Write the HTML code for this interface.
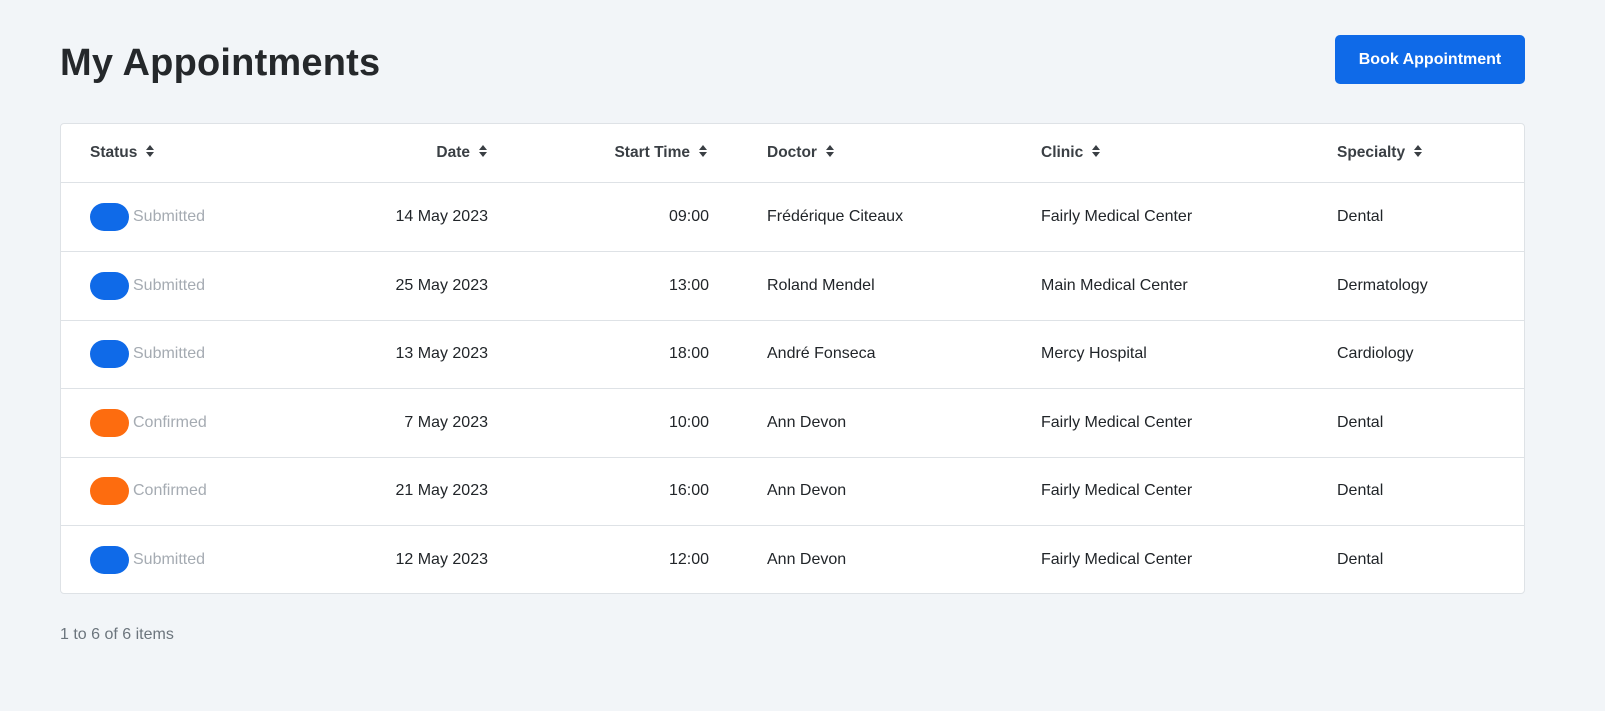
<!DOCTYPE html>
<html><head><style>
body{margin:0;background:#f2f5f8;font-family:"Liberation Sans",sans-serif;color:#212529;width:1605px;height:711px;overflow:hidden;position:relative}
h1{position:absolute;left:60px;top:42px;margin:0;font-size:38px;font-weight:600;color:#25282b;letter-spacing:0.2px}
.btn{position:absolute;left:1335px;top:35px;width:190px;height:49px;background:#0f6ae8;border-radius:5px;color:#fff;font-weight:bold;font-size:16px;line-height:49px;text-align:center}
.card{position:absolute;left:60px;top:123px;width:1463px;height:469px;background:#fff;border:1px solid #dee2e6;border-radius:4px}
.row{position:absolute;left:0;width:1463px;border-bottom:1px solid #dee2e6;height:68px}
.row:last-child{border-bottom:none}
.c{position:absolute;top:0;line-height:68px;font-size:16px;white-space:nowrap}
.h .c{font-weight:bold;color:#3a3f44;font-size:15.5px;line-height:58px}
.r{text-align:right}
.pill{position:absolute;left:29px;top:20px;width:39px;height:28px;border-radius:14px}
.st{left:72px;color:#a5abb2}
.s{display:inline-block;margin-left:8px;vertical-align:middle;width:10px;height:14px;position:relative;top:-2px}
.foot{position:absolute;left:60px;top:626px;font-size:16px;color:#6c757d}
</style></head><body>
<h1>My Appointments</h1>
<div class="btn">Book Appointment</div>
<div class="card">
<div class="row h" style="top:0;height:58px">
<div class="c" style="left:29px">Status<svg class="s" viewBox="0 0 10 14"><path d="M1 6L5 1 9 6zM1 8l4 5 4-5z" fill="#3a3f44"/></svg></div>
<div class="c r" style="right:1036px">Date<svg class="s" viewBox="0 0 10 14"><path d="M1 6L5 1 9 6zM1 8l4 5 4-5z" fill="#3a3f44"/></svg></div>
<div class="c r" style="right:816px">Start Time<svg class="s" viewBox="0 0 10 14"><path d="M1 6L5 1 9 6zM1 8l4 5 4-5z" fill="#3a3f44"/></svg></div>
<div class="c" style="left:706px">Doctor<svg class="s" viewBox="0 0 10 14"><path d="M1 6L5 1 9 6zM1 8l4 5 4-5z" fill="#3a3f44"/></svg></div>
<div class="c" style="left:980px">Clinic<svg class="s" viewBox="0 0 10 14"><path d="M1 6L5 1 9 6zM1 8l4 5 4-5z" fill="#3a3f44"/></svg></div>
<div class="c" style="left:1276px">Specialty<svg class="s" viewBox="0 0 10 14"><path d="M1 6L5 1 9 6zM1 8l4 5 4-5z" fill="#3a3f44"/></svg></div>
</div>
<div class="row" style="top:59px"><div class="pill" style="background:#0f6ae8"></div><div class="c st">Submitted</div><div class="c r" style="right:1036px">14 May 2023</div><div class="c r" style="right:815px">09:00</div><div class="c" style="left:706px">Frédérique Citeaux</div><div class="c" style="left:980px">Fairly Medical Center</div><div class="c" style="left:1276px">Dental</div></div>
<div class="row" style="top:127.5px"><div class="pill" style="background:#0f6ae8"></div><div class="c st">Submitted</div><div class="c r" style="right:1036px">25 May 2023</div><div class="c r" style="right:815px">13:00</div><div class="c" style="left:706px">Roland Mendel</div><div class="c" style="left:980px">Main Medical Center</div><div class="c" style="left:1276px">Dermatology</div></div>
<div class="row" style="top:196px"><div class="pill" style="background:#0f6ae8"></div><div class="c st">Submitted</div><div class="c r" style="right:1036px">13 May 2023</div><div class="c r" style="right:815px">18:00</div><div class="c" style="left:706px">André Fonseca</div><div class="c" style="left:980px">Mercy Hospital</div><div class="c" style="left:1276px">Cardiology</div></div>
<div class="row" style="top:264.5px"><div class="pill" style="background:#fd6c0f"></div><div class="c st">Confirmed</div><div class="c r" style="right:1036px">7 May 2023</div><div class="c r" style="right:815px">10:00</div><div class="c" style="left:706px">Ann Devon</div><div class="c" style="left:980px">Fairly Medical Center</div><div class="c" style="left:1276px">Dental</div></div>
<div class="row" style="top:333px"><div class="pill" style="background:#fd6c0f"></div><div class="c st">Confirmed</div><div class="c r" style="right:1036px">21 May 2023</div><div class="c r" style="right:815px">16:00</div><div class="c" style="left:706px">Ann Devon</div><div class="c" style="left:980px">Fairly Medical Center</div><div class="c" style="left:1276px">Dental</div></div>
<div class="row" style="top:401.5px"><div class="pill" style="background:#0f6ae8"></div><div class="c st">Submitted</div><div class="c r" style="right:1036px">12 May 2023</div><div class="c r" style="right:815px">12:00</div><div class="c" style="left:706px">Ann Devon</div><div class="c" style="left:980px">Fairly Medical Center</div><div class="c" style="left:1276px">Dental</div></div>
</div>
<div class="foot">1 to 6 of 6 items</div>
</body></html>
